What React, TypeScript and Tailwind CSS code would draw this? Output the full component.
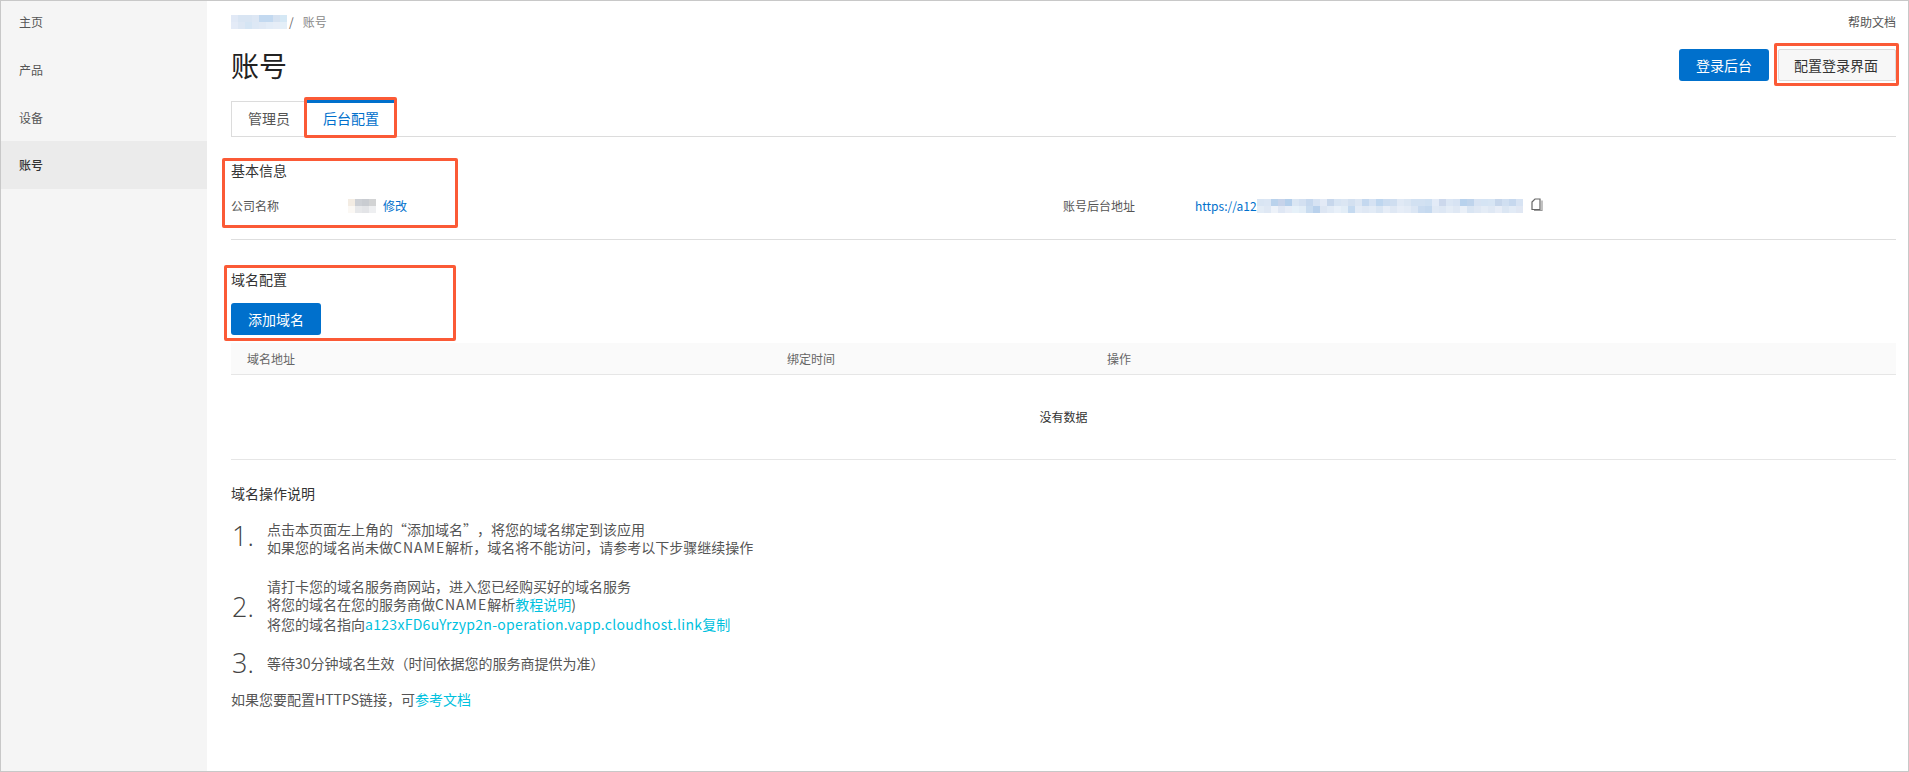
const navItems = ['主页', '产品', '设备'];

const urlMosaic = [
  ['#d9e5f3', '#dbe6f4', '#b9d2ec', '#c6d3ea', '#b4cfeb', '#dae6f3', '#d3e0f1', '#c6d8ee', '#d7e3f3', '#e3eaf6', '#c7d7ec', '#d7e4f3', '#dbe6f3', '#d3e0f0', '#dce6f3', '#c4d8ef', '#d5e2f3', '#bed6ef', '#cbdcf0', '#cfdef0', '#e0e9f5', '#dbe6f3', '#d2e1f2', '#d2e1f2', '#cfe0f2', '#e3ebf7', '#ccd8ec', '#dbe6f4', '#d7e3f3', '#b8d2ed', '#bfd4ec', '#d7e3f3', '#d5e4f4', '#d7e5f4', '#c6d6eb', '#d0dff1', '#c6d8ee', '#d7e3f3'],
  ['#e3ecf6', '#dfe8f4', '#edf2f9', '#dfe7f4', '#e7edf7', '#e6f1f9', '#e2edf7', '#c9dcf0', '#b9d1ec', '#dde6f3', '#e2ebf6', '#e8f0f9', '#e2edf7', '#c5daf0', '#e3ebf6', '#dfe8f4', '#e2ebf6', '#d9e5f3', '#e6edf7', '#dfe8f4', '#e6edf7', '#e3ebf6', '#dbe6f4', '#c9dbf0', '#c5d9ef', '#e0e9f5', '#dde7f4', '#e4ecf6', '#dfe8f4', '#eaf0f8', '#d9e5f3', '#dfe8f4', '#e4ecf6', '#dfe8f4', '#e7edf7', '#dbe6f3', '#e2ebf6', '#e0e7f3'],
];
const crumbMosaic = [
  ['#e1e9f6', '#d9e5f3', '#d9e5f3', '#dde7f4', '#c3d9f0', '#c3d9f0', '#d6e2f1', '#d5e8f5'],
  ['#e4ebf7', '#dde7f4', '#d5e5f4', '#dde8f5', '#e0e9f5', '#e3ecf7', '#e6edf7', '#e4eff8'],
];
const nameMosaic = [
  ['#f3ece3', '#cdd0d5', '#c9ccd1', '#d2d3d4'],
  ['#fbf8f4', '#e7e8ea', '#e3e4e7', '#eeeff1'],
];

function Mosaic({ rows }: { rows: string[][] }) {
  return (
    <div className="flex flex-col">
      {rows.map((row, r) => (
        <div key={r} className="flex">
          {row.map((c, i) => (
            <div key={i} className="w-[7px] h-[7px]" style={{ backgroundColor: c }} />
          ))}
        </div>
      ))}
    </div>
  );
}

function RedBox({ className }: { className: string }) {
  return <div className={`absolute border-[3px] border-[#fb5a36] rounded-[2px] pointer-events-none ${className}`} />;
}

function StepNum({ n, className = '' }: { n: number; className?: string }) {
  return (
    <div className={`w-[36px] h-[18px] pl-[1px] shrink-0 flex items-center font-['Open_Sans',sans-serif] font-light text-[27px] text-[#444] ${className}`}>
      {n}.
    </div>
  );
}

export default function App() {
  return (
    <div className="w-[1909px] h-[772px] flex border border-[#c8c8c8] bg-white overflow-hidden [text-spacing-trim:space-all] font-['Noto_Sans_CJK_SC','Liberation_Sans',sans-serif]">
      <div className="w-[206px] shrink-0 bg-[#f5f5f5]">
        <div className="-mt-[3px]">
          {navItems.map(item => (
            <div key={item} className="h-[48px] flex items-center pl-[18px] text-[12px] text-[#555]">{item}</div>
          ))}
        </div>
        <div className="h-[48px] -mt-[1px] flex items-center pl-[18px] text-[12px] font-medium text-[#333] bg-[#ebebeb]">账号</div>
      </div>

      <div className="relative flex-1 pl-[24px] pr-[12px] pt-[13px]">
        <div className="flex items-center justify-between h-[16px] text-[12px] text-[#888]">
          <div className="flex items-center">
            <Mosaic rows={crumbMosaic} />
            <span className="ml-[2px] text-[#666]">/</span>
            <span className="ml-[9px]">账号</span>
          </div>
          <a className="text-[#555]">帮助文档</a>
        </div>

        <div className="flex items-center justify-between h-[32px] mt-[19px]">
          <h1 className="text-[28px] leading-[36px] text-[#222] font-normal">账号</h1>
          <div className="flex gap-[9px]">
            <button className="w-[90px] h-[32px] rounded-[3px] bg-[#0070cc] text-white text-[14px]">登录后台</button>
            <button className="w-[118px] h-[32px] pr-[2px] rounded-[2px] border border-[#dcdcdc] bg-[#f7f7f7] text-[#333] text-[14px]">配置登录界面</button>
          </div>
        </div>

        <div className="flex h-[36px] mt-[20px] border-b border-[#dcdcdc] text-[14px]">
          <div className="w-[75px] h-[36px] pl-[16px] pb-[1px] flex items-center border border-r-0 border-[#dcdcdc] bg-white text-[#555]">管理员</div>
          <div className="w-[89px] h-[37px] -mt-[1px] pl-[17px] pb-[3px] flex items-center border-t-[3px] border-[#0070cc] bg-white text-[#0070cc]">后台配置</div>
        </div>

        <div className="mt-[23px] h-[20px] flex items-center text-[14px] text-[#333]">基本信息</div>
        <div className="mt-[16px] h-[20px] flex items-center text-[12px] text-[#555]">
          <span className="w-[117px]">公司名称</span>
          <Mosaic rows={nameMosaic} />
          <a className="ml-[7px] text-[#0070cc]">修改</a>
          <span className="ml-[656px] w-[132px]">账号后台地址</span>
          <a className="text-[#0070cc]">https://a12</a>
          <Mosaic rows={urlMosaic} />
          <svg className="ml-[8px] -mt-[3px]" width="12" height="13" viewBox="0 0 12 13" fill="none" stroke="#666" strokeWidth="1.2">
            <path d="M1 4 4 1h5v10.5H1z" />
            <path d="M11 2.5v10H3" stroke="#999" />
          </svg>
        </div>
        <div className="mt-[23px] h-[1px] bg-[#dedede]" />

        <div className="mt-[29px] h-[20px] flex items-center text-[14px] text-[#333]">域名配置</div>
        <button className="block mt-[14px] w-[90px] h-[32px] rounded-[3px] bg-[#0070cc] text-white text-[14px]">添加域名</button>
        <div className="mt-[8px] h-[32px] grid grid-cols-[540px_320px_1fr] items-center pl-[16px] bg-[#fafafa] border-b border-[#e6e6e6] text-[12px] text-[#666]">
          <span>域名地址</span>
          <span>绑定时间</span>
          <span>操作</span>
        </div>
        <div className="h-[85px] flex items-center justify-center border-b border-[#e6e6e6] text-[12px] text-[#333]">没有数据</div>

        <div className="mt-[23px] h-[20px] flex items-center text-[14px] text-[#333]">域名操作说明</div>

        <div className="mt-[17px] flex items-center text-[14px] leading-[18px] text-[#555]">
          <StepNum n={1} className="mb-[4px]" />
          <div>
            <p>点击本页面左上角的“添加域名”，将您的域名绑定到该应用</p>
            <p>如果您的域名尚未做<span className="tracking-[1px]">CNAME</span>解析，域名将不能访问，请参考以下步骤继续操作</p>
          </div>
        </div>
        <div className="mt-[21px] flex items-center text-[14px] leading-[18px] text-[#555]">
          <StepNum n={2} className="mt-[3px]" />
          <div>
            <p>请打卡您的域名服务商网站，进入您已经购买好的域名服务</p>
            <p>将您的域名在您的服务商做<span className="tracking-[1px]">CNAME</span>解析<a className="text-[#00c1de]">教程说明</a>)</p>
            <p className="mt-[2px]">将您的域名指向<a className="text-[#00c1de]"><span className="tracking-[0.3px]">a123xFD6uYrzyp2n-operation.vapp.cloudhost.link</span>复制</a></p>
          </div>
        </div>
        <div className="mt-[21px] flex items-center text-[14px] leading-[18px] text-[#555]">
          <StepNum n={3} />
          <p>等待30分钟域名生效（时间依据您的服务商提供为准）</p>
        </div>
        <p className="mt-[18px] text-[14px] leading-[18px] text-[#555]">如果您要配置HTTPS链接，可<a className="text-[#00c1de]">参考文档</a></p>

        <RedBox className="left-[97px] top-[96px] w-[93px] h-[41px]" />
        <RedBox className="left-[15px] top-[157px] w-[236px] h-[70px]" />
        <RedBox className="left-[17px] top-[264px] w-[232px] h-[76px]" />
        <RedBox className="left-[1567px] top-[42px] w-[125px] h-[43px]" />
      </div>
    </div>
  );
}
